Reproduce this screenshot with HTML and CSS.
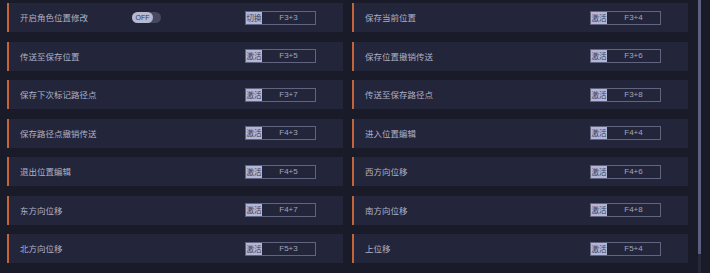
FILE: index.html
```html
<!DOCTYPE html>
<html lang="zh">
<head>
<meta charset="utf-8">
<link rel="stylesheet" href="styles.css">
</head>
<body>
<div class="page">
  <div class="list">
    <div class="card">
      <span class="label">开启角色位置修改</span>
      <span class="toggle"><span class="knob">OFF</span></span>
      <span class="key"><span class="act">切换</span><span class="combo">F3+3</span></span>
    </div>
    <div class="card">
      <span class="label">保存当前位置</span>
      <span class="key"><span class="act">激活</span><span class="combo">F3+4</span></span>
    </div>
    <div class="card">
      <span class="label">传送至保存位置</span>
      <span class="key"><span class="act">激活</span><span class="combo">F3+5</span></span>
    </div>
    <div class="card">
      <span class="label">保存位置撤销传送</span>
      <span class="key"><span class="act">激活</span><span class="combo">F3+6</span></span>
    </div>
    <div class="card">
      <span class="label">保存下次标记路径点</span>
      <span class="key"><span class="act">激活</span><span class="combo">F3+7</span></span>
    </div>
    <div class="card">
      <span class="label">传送至保存路径点</span>
      <span class="key"><span class="act">激活</span><span class="combo">F3+8</span></span>
    </div>
    <div class="card">
      <span class="label">保存路径点撤销传送</span>
      <span class="key"><span class="act">激活</span><span class="combo">F4+3</span></span>
    </div>
    <div class="card">
      <span class="label">进入位置编辑</span>
      <span class="key"><span class="act">激活</span><span class="combo">F4+4</span></span>
    </div>
    <div class="card">
      <span class="label">退出位置编辑</span>
      <span class="key"><span class="act">激活</span><span class="combo">F4+5</span></span>
    </div>
    <div class="card">
      <span class="label">西方向位移</span>
      <span class="key"><span class="act">激活</span><span class="combo">F4+6</span></span>
    </div>
    <div class="card">
      <span class="label">东方向位移</span>
      <span class="key"><span class="act">激活</span><span class="combo">F4+7</span></span>
    </div>
    <div class="card">
      <span class="label">南方向位移</span>
      <span class="key"><span class="act">激活</span><span class="combo">F4+8</span></span>
    </div>
    <div class="card">
      <span class="label">北方向位移</span>
      <span class="key"><span class="act">激活</span><span class="combo">F5+3</span></span>
    </div>
    <div class="card">
      <span class="label">上位移</span>
      <span class="key"><span class="act">激活</span><span class="combo">F5+4</span></span>
    </div>
  </div>
  <div class="scrollbar"><div class="thumb"></div></div>
</div>
</body>
</html>
```
FILE: styles.css
```css
html, body {
  margin: 0;
  padding: 0;
  background: #1a1b28;
  width: 710px;
  height: 273px;
  overflow: hidden;
  font-family: "Noto Sans CJK SC", "Noto Sans", sans-serif;
}
.page {
  display: flex;
  height: 273px;
}
.list {
  display: grid;
  grid-template-columns: 336px 336px;
  grid-auto-rows: 29px;
  column-gap: 9px;
  row-gap: 9.5px;
  padding: 3px 10px 0 7px;
  align-content: start;
}
.card {
  display: flex;
  align-items: center;
  background: #23253a;
  border-left: 2px solid #c4643a;
  padding-left: 11px;
  position: relative;
}
.label {
  font-size: 8.5px;
  color: #aeb1c6;
  letter-spacing: 0;
  line-height: 1;
}
.toggle {
  position: absolute;
  left: 123px;
  top: 9px;
  width: 29px;
  height: 11px;
  border-radius: 6px;
  background: #464960;
}
.knob {
  display: flex;
  align-items: center;
  justify-content: center;
  width: 21px;
  height: 11px;
  border-radius: 6px;
  background: #b7b9d2;
  color: #383a50;
  font-family: "Liberation Sans", sans-serif;
  font-size: 7px;
  line-height: 1;
}
.key {
  margin-left: auto;
  margin-right: 27px;
  display: flex;
  width: 71px;
  height: 14px;
  box-sizing: border-box;
  border: 1px solid #61647e;
}
.act {
  width: 16px;
  background: #b3b6d6;
  color: #3c3e56;
  font-size: 7.5px;
  line-height: 12px;
  text-align: center;
  white-space: nowrap;
  overflow: hidden;
}
.combo {
  flex: 1;
  text-align: center;
  color: #a2a5bc;
  font-family: "Liberation Sans", sans-serif;
  font-size: 8px;
  line-height: 12px;
}
.scrollbar {
  width: 3px;
  height: 273px;
  background: #262838;
}
.thumb {
  width: 3px;
  height: 254px;
  background: #5c5f80;
}
```
